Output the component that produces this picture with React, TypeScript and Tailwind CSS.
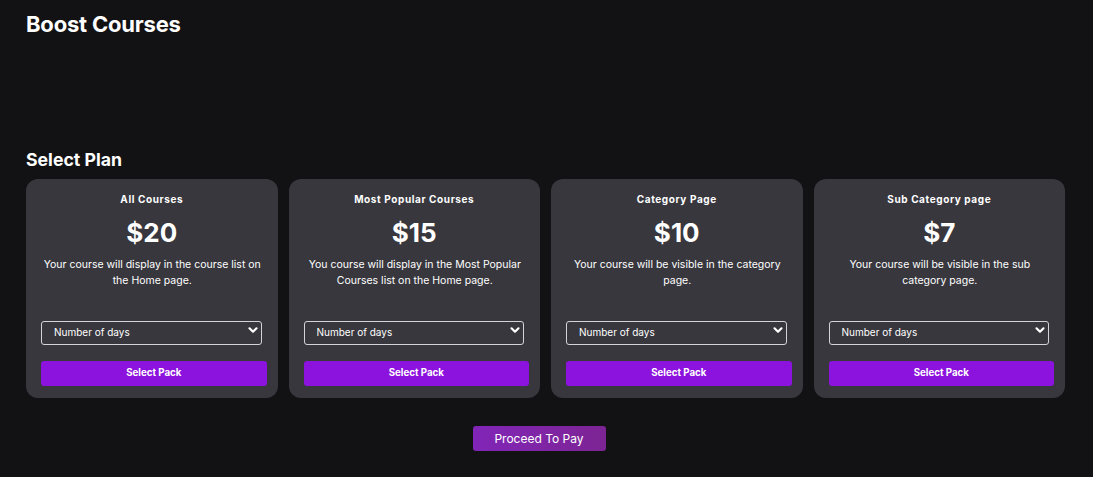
import React from "react";

const plans = [
  { title: "All Courses", price: "$20", desc: "Your course will display in the course list on the Home page." },
  { title: "Most Popular Courses", price: "$15", desc: "You course will display in the Most Popular Courses list on the Home page." },
  { title: "Category Page", price: "$10", desc: "Your course will be visible in the category page." },
  { title: "Sub Category page", price: "$7", desc: "Your course will be visible in the sub category page." },
];

function Chevron() {
  return (
    <svg width="12" height="12" viewBox="0 0 12 12" className="absolute right-[3px] top-1/2 -translate-y-1/2 pointer-events-none">
      <path d="M2.5 4.3 L6 7.7 L9.5 4.3" stroke="#ffffff" strokeWidth="2.2" fill="none" strokeLinecap="round" strokeLinejoin="round" />
    </svg>
  );
}

export default function App() {
  return (
    <div className="min-h-[477px] w-full bg-[#121214] text-white font-['Inter',sans-serif] pl-[26px] pr-[28px] pt-[10px] pb-[26px]">
      <h1 className="text-[22px] font-bold leading-[28px] tracking-[-0.2px]">Boost Courses</h1>
      <h2 className="mt-[111px] text-[17.7px] font-bold leading-[22px]">Select Plan</h2>
      <div className="mt-[8px] grid grid-cols-4 gap-[11px]">
        {plans.map((p) => (
          <div key={p.title} className="bg-[#38373e] rounded-[12px] pt-[13px] pb-[12px] pl-[15px] pr-[11px] flex flex-col h-[219px]">
            <div className="text-center pr-[4px] text-[10px] font-bold tracking-[0.6px] leading-[14px]">{p.title}</div>
            <div className="text-center pr-[4px] text-[26px] font-bold leading-[34px] mt-[10px]">{p.price}</div>
            <div className="text-center text-[10.5px] leading-[16px] mt-[7px] pr-[3px] h-[32px]">{p.desc}</div>
            <div className="relative mt-[29px] mr-[5px] h-[24px]">
              <select className="appearance-none w-full h-full bg-transparent border border-[#d4d4d8] rounded-[3px] text-[10px] pl-[12px] text-white outline-none">
                <option>Number of days</option>
              </select>
              <Chevron />
            </div>
            <button className="mt-[19px] h-[25px] w-full rounded-[3px] bg-[#8c12dd] text-[9.7px] font-bold text-white">
              Select Pack
            </button>
          </div>
        ))}
      </div>
      <div className="flex justify-center mt-[28px] pr-[13px]">
        <button className="w-[133px] h-[25px] rounded-[3px] bg-gradient-to-r from-[#8125b8] to-[#7d2494] text-[12px] text-white">
          Proceed To Pay
        </button>
      </div>
    </div>
  );
}
